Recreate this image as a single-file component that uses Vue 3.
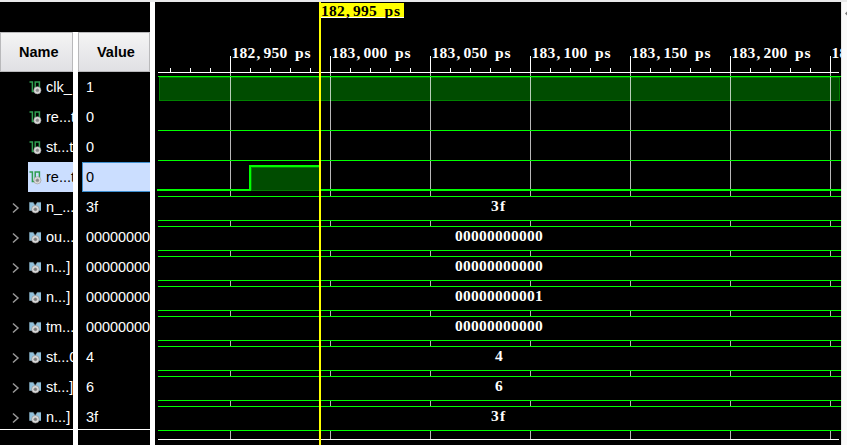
<script setup>
const signals = [
  { name: 'clk_', value: '1' },
  { name: 're...t', value: '0' },
  { name: 'st...t', value: '0' },
  { name: 're...t', value: '0', selected: true },
  { name: 'n_...', value: '3f', bus: true },
  { name: 'ou...', value: '00000000', wave: '00000000000', bus: true },
  { name: 'n...]', value: '00000000', wave: '00000000000', bus: true },
  { name: 'n...]', value: '00000000', wave: '00000000001', bus: true },
  { name: 'tm...', value: '00000000', wave: '00000000000', bus: true },
  { name: 'st...0', value: '4', bus: true },
  { name: 'st...]', value: '6', bus: true },
  { name: 'n...]', value: '3f', bus: true },
]

const buses = signals
  .map((s, i) => ({ ...s, label: s.wave || s.value, top: 194 + (i - 4) * 30 }))
  .filter((s) => s.bus)

const majors = Array.from({ length: 7 }, (_, i) => ({
  x: 75 + i * 100,
  label: `${(182950 + i * 50).toLocaleString('en-US')} ps`,
}))
const minors = Array.from({ length: 34 }, (_, i) => 15 + i * 20).filter((x) => (x - 75) % 100 !== 0)

// One x coordinate per character gives a fixed 8px pitch; narrow glyphs are nudged inside their cell.
const nudge = { ',': 1, s: 1, f: 1, p: -0.5 }
const pitch = (text, start) => [...text].map((c, i) => start + i * 8 + (nudge[c] || 0)).join(' ')
</script>

<template>
  <div class="viewer">
    <div class="top-edge"></div>
    <div class="main">
      <div class="table">
        <div class="blank"></div>
        <div class="columns">
          <div class="names">
            <div class="head">Name</div>
            <div v-for="(s, i) in signals" :key="i" class="row">
              <div class="toggle">
                <svg v-if="s.bus" width="8" height="12" viewBox="0 0 8 12">
                  <path d="M1 1.5L6 6L1 10.5" fill="none" stroke="#999" stroke-width="1.5" />
                </svg>
              </div>
              <div class="signal" :class="{ selected: s.selected }">
                <svg v-if="s.bus" class="icon" width="14" height="14" viewBox="0 0 14 14">
                  <path d="M1.3 1.2H5.2L7.2 4.5L9.2 1.2H13V9.8H1.3z" fill="#91c1dc" />
                  <path d="M1.3 1.4H5.2L7.2 4.5L9.2 1.4H13" fill="none" stroke="#657984" stroke-width=".6" />
                  <circle cx="7.4" cy="8.3" r="3.8" fill="#dcdcdc" stroke="#888" stroke-width=".6" />
                  <circle cx="7.4" cy="8.3" r="1.6" fill="#777" stroke="#999" stroke-width=".6" />
                </svg>
                <svg v-else class="icon" width="14" height="14" viewBox="0 0 14 14">
                  <path d="M1.5 1H4.4V10.5H7.2V1H11.4V7" fill="none" stroke="#2f9c50" stroke-width="1.5" />
                  <circle cx="9.4" cy="9.3" r="3.6" fill="#dcdcdc" stroke="#999" stroke-width=".6" />
                  <circle cx="9.4" cy="9.3" r="1.5" fill="#888" stroke="#999" stroke-width=".6" />
                </svg>
                <span>{{ s.name }}</span>
              </div>
            </div>
            <div class="end-line"></div>
          </div>
          <div class="values">
            <div class="head">Value</div>
            <div v-for="(s, i) in signals" :key="i" class="row">
              <div class="value" :class="{ selected: s.selected }">{{ s.value }}</div>
            </div>
            <div class="end-line"></div>
          </div>
        </div>
      </div>
      <svg class="wave" width="686" height="443" viewBox="0 0 686 443" shape-rendering="crispEdges">
        <rect width="686" height="443" fill="#000" />
        <rect x="4" y="75" width="681" height="24" fill="#008000" />
        <rect x="5" y="76" width="679" height="22" fill="#004c00" />
        <g fill="#fff">
          <rect x="3" y="70" width="681" height="1" />
          <rect v-for="x in minors" :key="x" :x="x" y="66" width="1" height="4" />
          <g v-for="m in majors" :key="m.x">
            <rect :x="m.x" y="54" width="1" height="17" />
            <rect :x="m.x" y="71" width="1" height="366" fill="#fff" fill-opacity=".72" />
            <text :x="pitch(m.label, m.x + 1.5)" y="56">{{ m.label }}</text>
          </g>
        </g>
        <g fill="#00ff00">
          <rect x="3" y="74" width="683" height="1" />
          <rect x="3" y="128" width="683" height="1" />
          <rect x="3" y="158" width="683" height="1" />
          <rect x="2" y="187" width="94" height="2" />
          <rect x="94" y="163" width="2" height="26" />
          <rect x="94" y="163" width="71" height="2" />
          <rect x="165" y="187" width="521" height="2" />
        </g>
        <rect x="96" y="165" width="69" height="24" fill="#008000" />
        <rect x="97" y="166" width="68" height="22" fill="#004c00" />
        <g v-for="b in buses" :key="b.top">
          <rect x="3" :y="b.top" width="683" height="25" fill="#00ff00" />
          <rect x="3" :y="b.top + 1" width="683" height="23" fill="#000" />
          <text :x="pitch(b.label, 344 - b.label.length * 4)" :y="b.top + 15" fill="#fff">{{ b.label }}</text>
        </g>
        <rect x="3" y="437" width="681" height="1" fill="#fff" />
        <rect x="164" y="0" width="2" height="443" fill="#ff0" />
        <rect x="165" y="1" width="84" height="15" fill="#ff0" />
        <rect x="166" y="15" width="83" height="1" fill="#fff" />
        <text :x="pitch('182,995 ps', 166)" y="14" fill="#000">182,995 ps</text>
      </svg>
      <div class="right-edge">
        <svg width="6" height="20" viewBox="0 0 6 20"><path d="M4 11.5L6 9.5V13.5Z" fill="#777" /></svg>
      </div>
    </div>
  </div>
</template>

<style>
body {
  margin: 0;
  overflow: hidden;
}
</style>

<style scoped>
.viewer {
  width: 847px;
  height: 445px;
  overflow: hidden;
  background: #000;
  color: #fff;
  font: 14.5px/30px "Liberation Sans", sans-serif;
}
.top-edge {
  height: 2px;
  background: #e8e9ea;
}
.main {
  display: flex;
  height: 443px;
}
.table {
  width: 150px;
  flex: none;
  border-right: 5px solid #fff;
}
.blank {
  height: 30px;
}
.columns {
  display: flex;
  height: 413px;
  background: #fff;
  gap: 5px;
}
.names,
.values {
  width: 73px;
  overflow: hidden;
  background: #000;
  white-space: nowrap;
}
.values {
  width: 72px;
}
.head {
  box-sizing: border-box;
  height: 40px;
  padding-left: 18px;
  border: 1px solid #b9b9bb;
  background: linear-gradient(#f4f4f4, #e0e0e4);
  color: #000;
  font-weight: bold;
  line-height: 39px;
}
.row {
  display: flex;
  height: 30px;
}
.toggle {
  flex: none;
  width: 16px;
  padding-left: 12px;
  display: flex;
  align-items: center;
}
.toggle svg {
  margin-top: 2px;
}
.signal {
  flex: none;
  width: 100px;
  display: flex;
  align-items: center;
  gap: 4px;
}
.icon {
  flex: none;
  margin-top: 2px;
}
.selected {
  background: #cbdeff;
  color: #000;
}
.value {
  box-sizing: border-box;
  flex: none;
  width: 90px;
  margin-left: 4px;
  padding-left: 4px;
  letter-spacing: -0.06px;
}
.value.selected {
  padding-left: 3px;
  border: 1px solid #3f90d0;
  line-height: 28px;
}
.end-line {
  height: 1px;
  margin-top: -3px;
  background: #fff;
}
.wave {
  flex: none;
  display: block;
}
.wave text {
  font: bold 15.5px "Liberation Serif", serif;
}
.right-edge {
  flex: 1;
  background: #fafafa;
  box-shadow: inset 1px 0 #e8e8e8;
}
.right-edge svg {
  display: block;
}
</style>
